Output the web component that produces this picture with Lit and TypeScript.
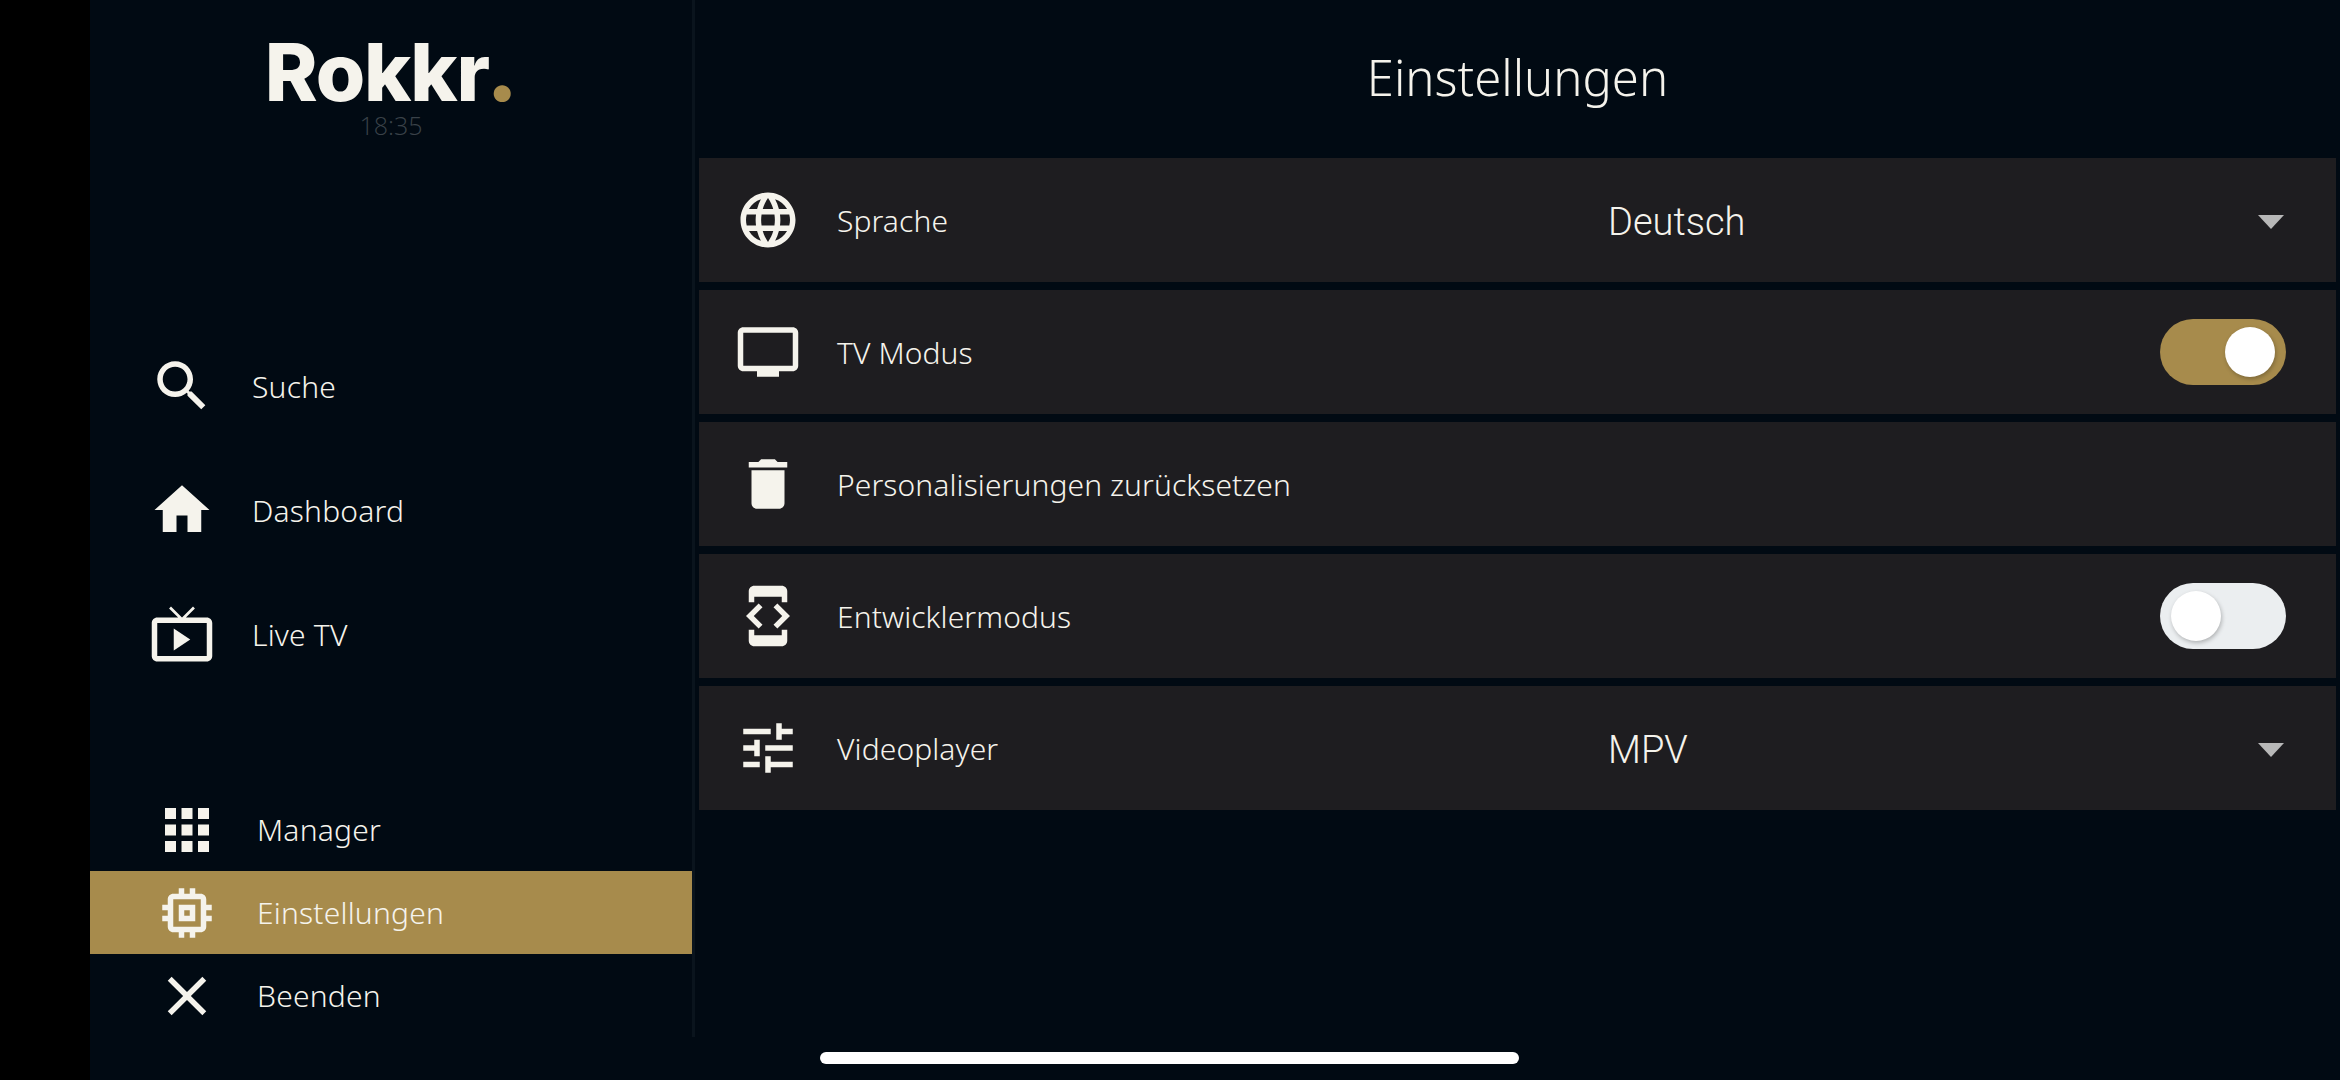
import { LitElement, html, css, svg } from "lit";
import { customElement } from "lit/decorators.js";

const P: Record<string, string> = {
  search: "M15.5 14h-.79l-.28-.27C15.41 12.59 16 11.11 16 9.5 16 5.91 13.09 3 9.5 3S3 5.91 3 9.5 5.91 16 9.5 16c1.61 0 3.09-.59 4.23-1.57l.27.28v.79l5 4.99L20.49 19l-4.99-5zm-6 0C7.01 14 5 11.99 5 9.5S7.01 5 9.5 5 14 7.01 14 9.5 11.99 14 9.5 14z",
  home: "M10 20v-6h4v6h5v-8h3L12 3 2 12h3v8z",
  live: "M21 6h-7.59l3.29-3.29L16 2l-4 4-4-4-.71.71L10.59 6H3c-1.1 0-2 .89-2 2v12c0 1.1.9 2 2 2h18c1.1 0 2-.9 2-2V8c0-1.11-.9-2-2-2zm0 14H3V8h18v12zM9 10v8l6-4z",
  apps: "M4 8h4V4H4v4zm6 12h4v-4h-4v4zm-6 0h4v-4H4v4zm0-6h4v-4H4v4zm6 0h4v-4h-4v4zm6-10v4h4V4h-4zm-6 4h4V4h-4v4zm6 6h4v-4h-4v4zm0 6h4v-4h-4v4z",
  memory: "M15 9H9v6h6V9zm-2 4h-2v-2h2v2zm8-2V9h-2V7c0-1.1-.9-2-2-2h-2V3h-2v2h-2V3H9v2H7c-1.1 0-2 .9-2 2v2H3v2h2v2H3v2h2v2c0 1.1.9 2 2 2h2v2h2v-2h2v2h2v-2h2c1.1 0 2-.9 2-2v-2h2v-2h-2v-2h2zm-4 6H7V7h10v10z",
  close: "M19 6.41L17.59 5 12 10.59 6.41 5 5 6.41 10.59 12 5 17.59 6.41 19 12 13.41 17.59 19 19 17.59 13.41 12z",
  language: "M11.99 2C6.47 2 2 6.48 2 12s4.47 10 9.99 10C17.52 22 22 17.52 22 12S17.52 2 11.99 2zm6.93 6h-2.95c-.32-1.25-.78-2.45-1.38-3.56 1.84.63 3.37 1.91 4.33 3.56zM12 4.04c.83 1.2 1.48 2.53 1.91 3.96h-3.82c.43-1.43 1.08-2.76 1.91-3.96zM4.26 14C4.1 13.36 4 12.69 4 12s.1-1.36.26-2h3.38c-.08.66-.14 1.32-.14 2 0 .68.06 1.34.14 2H4.26zm.82 2h2.95c.32 1.25.78 2.45 1.38 3.56-1.84-.63-3.37-1.9-4.33-3.56zm2.95-8H5.08c.96-1.66 2.49-2.93 4.33-3.56C8.81 5.55 8.35 6.75 8.03 8zM12 19.96c-.83-1.2-1.48-2.53-1.91-3.96h3.82c-.43 1.43-1.08 2.76-1.91 3.96zM14.34 14H9.66c-.09-.66-.16-1.32-.16-2 0-.68.07-1.35.16-2h4.68c.09.65.16 1.32.16 2 0 .68-.07 1.34-.16 2zm.25 5.56c.6-1.11 1.06-2.31 1.38-3.56h2.95c-.96 1.65-2.49 2.93-4.33 3.56zM16.36 14c.08-.66.14-1.32.14-2 0-.68-.06-1.34-.14-2h3.38c.16.64.26 1.31.26 2s-.1 1.36-.26 2h-3.38z",
  tv: "M21 3H3c-1.1 0-2 .9-2 2v12c0 1.1.9 2 2 2h5v2h8v-2h5c1.1 0 1.99-.9 1.99-2L23 5c0-1.1-.9-2-2-2zm0 14H3V5h18v12z",
  del: "M6 19c0 1.1.9 2 2 2h8c1.1 0 2-.9 2-2V7H6v12zM19 4h-3.5l-1-1h-5l-1 1H5v2h14V4z",
  dev: "M7 5h10v2h2V3c0-1.1-.9-1.99-2-1.99L7 1c-1.1 0-2 .9-2 2v4h2V5zm8.41 11.59L20 12l-4.59-4.59L14 8.83 17.17 12 14 15.17l1.41 1.42zM10 15.17L6.83 12 10 8.83 8.59 7.41 4 12l4.59 4.59L10 15.17zM17 19H7v-2H5v4c0 1.1.9 2 2 2h10c1.1 0 2-.9 2-2v-4h-2v2z",
  tune: "M3 17v2h6v-2H3zM3 5v2h10V5H3zm10 16v-2h8v-2h-8v-2h-2v6h2zM7 9v2H3v2h4v2h2V9H7zm14 4v-2H11v2h10zm-6-4h2V7h4V5h-4V3h-2v6z",
};

const icon = (n: string) =>
  html`<svg class="ic" viewBox="0 0 24 24" fill="currentColor">${svg`<path d=${P[n]}></path>`}</svg>`;

@customElement("app-root")
export class AppRoot extends LitElement {
  static styles = css`
    :host {
      display: flex;
      width: 2340px;
      height: 1080px;
      background: #000;
      position: relative;
      overflow: hidden;
      color: #f5f3ec;
      font-family: "Noto Sans", sans-serif;
      font-weight: 300;
    }
    .ic { width: 66px; height: 66px; flex: none; display: block; }
    .app { margin-left: 90px; flex: 1; display: flex; background: #010a13; height: 1080px; }
    .side {
      width: 602px;
      height: 1037px;
      border-right: 3px solid #0a141d;
      display: flex;
      flex-direction: column;
    }
    .brand { height: 324px; display: flex; flex-direction: column; align-items: center; padding-top: 32px; box-sizing: border-box; }
    .logo { font: 800 80px/80px Inter, sans-serif; letter-spacing: -1.2px; color: #f5f3ec; white-space: nowrap; height: 80px; }
    .logo span { color: #a78b4c; font-size: 92px; line-height: 0; margin-left: -3px; }
    .time { font: 300 25px/30px "Open Sans", sans-serif; color: #3a4249; margin-top: -2px; }
    .top .it { height: 124px; padding-left: 59px; gap: 37px; }
    .bottom { margin-top: auto; }
    .bottom .it { height: 83px; padding-left: 64px; gap: 37px; }
    .it { display: flex; align-items: center; font-size: 30px; letter-spacing: 0.2px; box-sizing: border-box; }
    .it.on { background: #a78b4c; }
    .main { flex: 1; padding: 0 4px; display: flex; flex-direction: column; }
    .title { height: 158px; flex: none; display: flex; align-items: center; justify-content: center; font-size: 49px; padding-bottom: 5px; box-sizing: border-box; }
    .rows { display: flex; flex-direction: column; gap: 8px; }
    .row { height: 124px; background: #1e1d20; display: grid; grid-template-columns: 138px 771px 1fr; align-items: center; }
    .row .ic { margin-left: 36px; }
    .label { font-size: 30px; letter-spacing: 0.1px; grid-column: 2; }
    .value { font: 300 38px Roboto, sans-serif; grid-column: 3; display: flex; align-items: center; padding-top: 3px; }
    .arrow { margin-left: auto; margin-right: 52px; width: 0; height: 0; border-left: 13.5px solid transparent; border-right: 13.5px solid transparent; border-top: 14px solid #b8b8b8; }
    .sw { grid-column: 3; justify-self: end; margin-right: 50px; width: 126px; height: 66px; border-radius: 33px; display: flex; align-items: center; box-sizing: border-box; }
    .sw.on { background: #a78b4c; justify-content: flex-end; padding-right: 11px; }
    .sw.off { background: #ebeef0; padding-left: 11px; }
    .knob { width: 50px; height: 50px; border-radius: 50%; background: #fff; box-shadow: 1px 2px 4px rgba(0,0,0,.25); }
    .bar { position: absolute; left: 820px; top: 1052px; width: 699px; height: 12px; border-radius: 6px; background: #fff; }
  `;

  private row(ic: string, label: string, extra: unknown = "") {
    return html`<div class="row">${icon(ic)}<div class="label">${label}</div>${extra}</div>`;
  }

  render() {
    const drop = (v: string) => html`<div class="value">${v}<div class="arrow"></div></div>`;
    const sw = (on: boolean) => html`<div class="sw ${on ? "on" : "off"}"><div class="knob"></div></div>`;
    const it = (ic: string, t: string, on = false) =>
      html`<div class="it ${on ? "on" : ""}">${icon(ic)}<span>${t}</span></div>`;
    return html`
      <div class="app">
        <div class="side">
          <div class="brand">
            <div class="logo">Rokkr<span>.</span></div>
            <div class="time">18:35</div>
          </div>
          <div class="top">${it("search", "Suche")}${it("home", "Dashboard")}${it("live", "Live TV")}</div>
          <div class="bottom">${it("apps", "Manager")}${it("memory", "Einstellungen", true)}${it("close", "Beenden")}</div>
        </div>
        <div class="main">
          <div class="title">Einstellungen</div>
          <div class="rows">
            ${this.row("language", "Sprache", drop("Deutsch"))}
            ${this.row("tv", "TV Modus", sw(true))}
            ${this.row("del", "Personalisierungen zurücksetzen")}
            ${this.row("dev", "Entwicklermodus", sw(false))}
            ${this.row("tune", "Videoplayer", drop("MPV"))}
          </div>
        </div>
      </div>
      <div class="bar"></div>
    `;
  }
}
